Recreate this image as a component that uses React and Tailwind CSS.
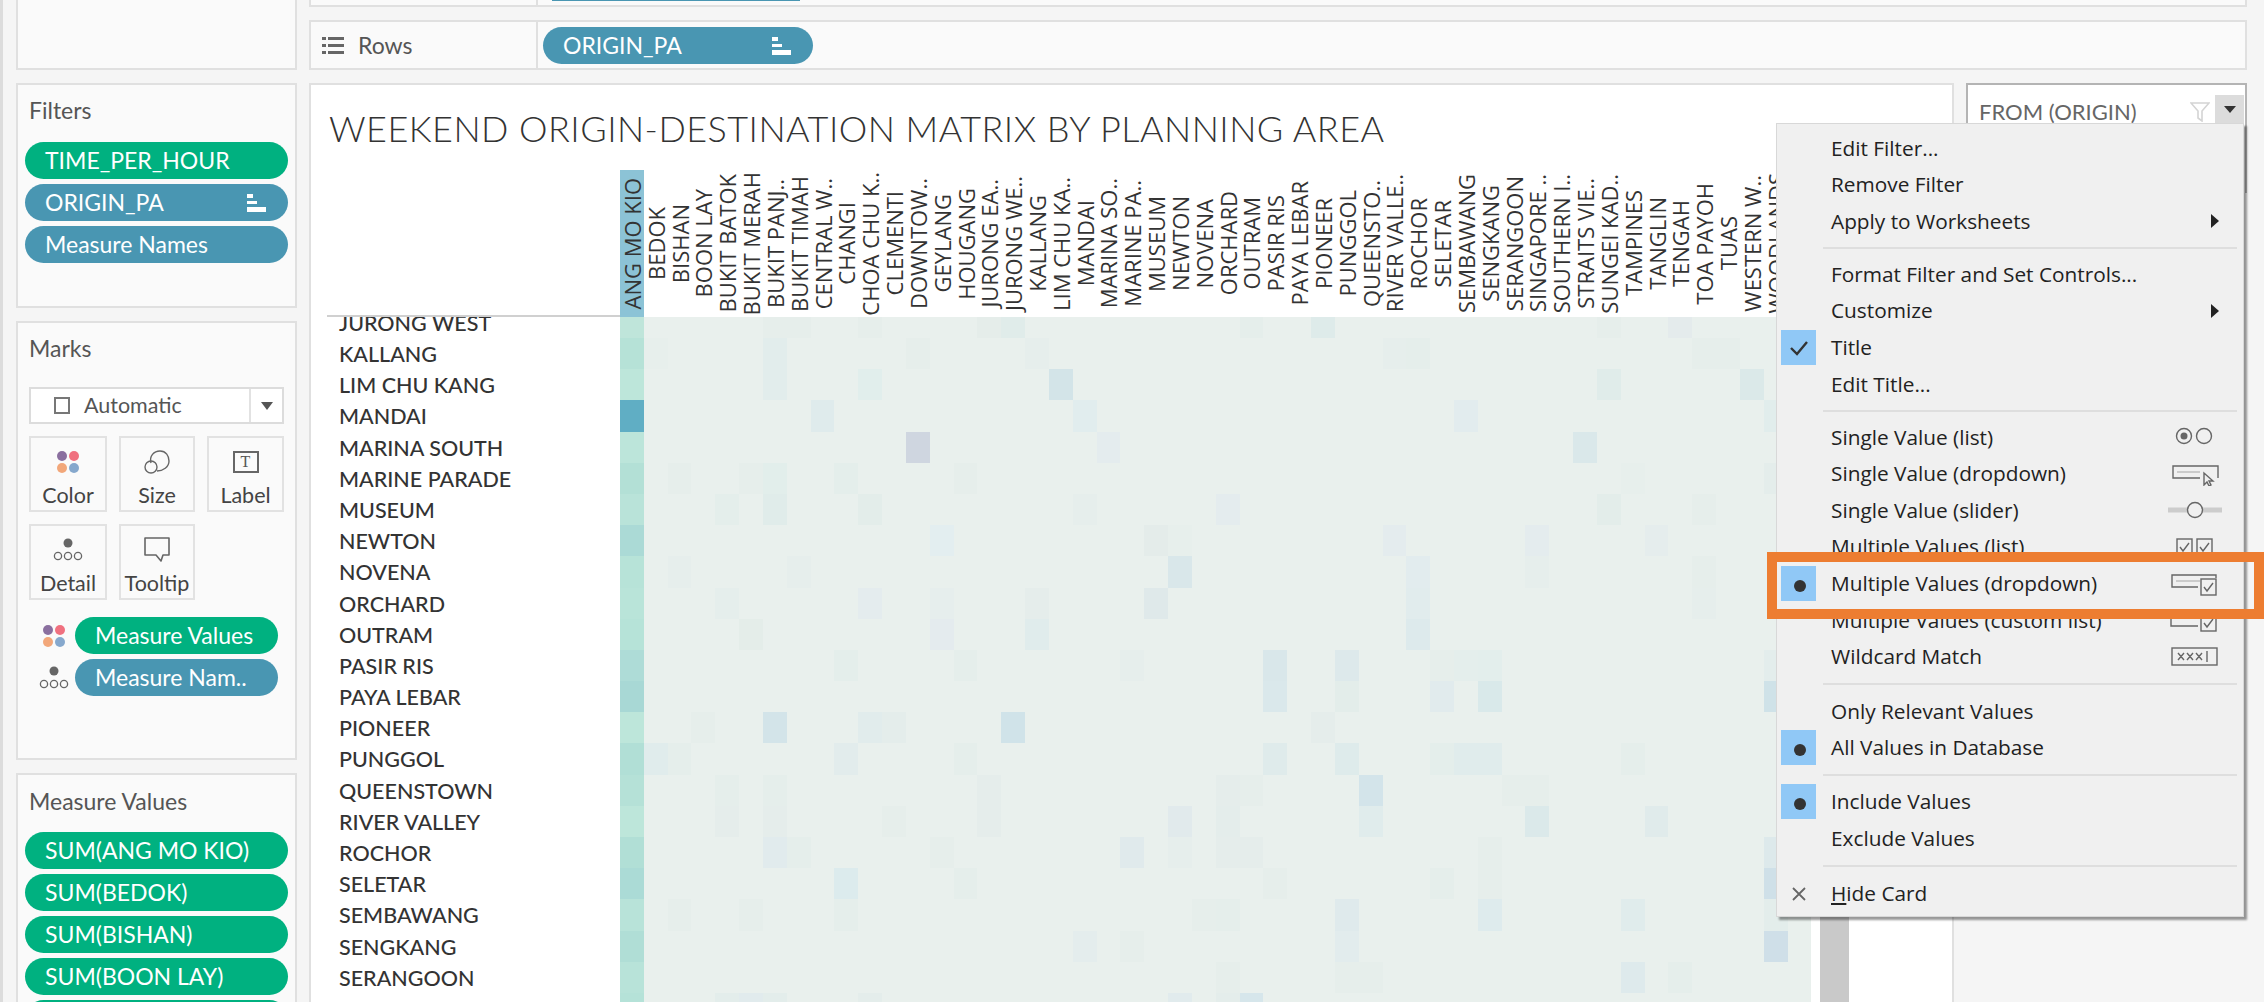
import React from "react";

const COLUMNS = ["ANG MO KIO","BEDOK","BISHAN","BOON LAY","BUKIT BATOK","BUKIT MERAH","BUKIT PANJ..","BUKIT TIMAH","CENTRAL W..","CHANGI","CHOA CHU K..","CLEMENTI","DOWNTOW..","GEYLANG","HOUGANG","JURONG EA..","JURONG WE..","KALLANG","LIM CHU KA..","MANDAI","MARINA SO..","MARINE PA..","MUSEUM","NEWTON","NOVENA","ORCHARD","OUTRAM","PASIR RIS","PAYA LEBAR","PIONEER","PUNGGOL","QUEENSTO..","RIVER VALLE..","ROCHOR","SELETAR","SEMBAWANG","SENGKANG","SERANGOON","SINGAPORE ..","SOUTHERN I..","STRAITS VIE..","SUNGEI KAD..","TAMPINES","TANGLIN","TENGAH","TOA PAYOH","TUAS","WESTERN W..","WOODLANDS","YISHUN"];

const ROWS = ["JURONG WEST","KALLANG","LIM CHU KANG","MANDAI","MARINA SOUTH","MARINE PARADE","MUSEUM","NEWTON","NOVENA","ORCHARD","OUTRAM","PASIR RIS","PAYA LEBAR","PIONEER","PUNGGOL","QUEENSTOWN","RIVER VALLEY","ROCHOR","SELETAR","SEMBAWANG","SENGKANG","SERANGOON","SINGAPORE RIVER"];

const FIRST_COL = ["#bfe5da","#b6e2d7","#bde6da","#60aec4","#bce5da","#b3e0d6","#b9e3d9","#abdad6","#b7e3d8","#b9e4d9","#b6e3d8","#aedcd7","#a8d8d5","#bde6da","#b1dfd6","#b5e1d7","#bde6da","#b1dfd6","#abdbd6","#b8e3d9","#b0ded6","#b8e3d9","#b5e2d8"];

// row -> { column: colour } for the cells that stand out
const HOT = {
  0: {6:"#e6eeeb",7:"#e6eeeb",10:"#e6eeeb",15:"#e5edea",16:"#e0ecea",26:"#e5eeeb",29:"#deebea",41:"#e6eeeb",44:"#e4ebec"},
  1: {1:"#e7efec",6:"#e2edec",12:"#e6eeeb",17:"#e6eeec",32:"#e6eeec",33:"#e5eeeb",45:"#e6eeeb",46:"#e6eeeb"},
  2: {6:"#e2edec",10:"#e1eeec",18:"#d3e4e8",41:"#e0ecea",47:"#dbe9e9"},
  3: {8:"#dfebec",19:"#e1edee",35:"#e2ecee",48:"#e1edec"},
  4: {12:"#cfd6e0",20:"#e4ecee",40:"#dae8ea"},
  5: {2:"#e6eeeb",5:"#e6eeeb",6:"#e2eeeb",9:"#e4eeeb",14:"#e6eeeb",42:"#e7efec",48:"#e4edeb"},
  6: {4:"#e4eeeb",6:"#e0ecea",10:"#e3edea",19:"#e6eeec",25:"#e4ecee",41:"#e3edea",45:"#e6eeeb"},
  7: {13:"#e3eef0",22:"#e4ecea",23:"#e7efec",32:"#e4ecee",38:"#e4ecee",43:"#e5eded"},
  8: {2:"#e6eeec",7:"#e6eeec",23:"#d9e7ea",33:"#e2ecee",38:"#e6eeec",45:"#e6eeeb"},
  9: {4:"#e5eeec",10:"#e4ecee",13:"#e6eeed",17:"#e5edeb",22:"#dfe9ea",33:"#e1eced",45:"#e6eeec"},
  10: {5:"#e4ede9",13:"#e4ebee",17:"#e0ecec",33:"#ddeaec"},
  11: {9:"#e4eeeb",14:"#e5eeeb",21:"#e6eeec",27:"#d9e7ea",30:"#dde9eb",34:"#e6eeeb",35:"#e4eeec",36:"#e3eeec",48:"#e3edec"},
  12: {27:"#dae8eb",30:"#e3edea",34:"#e1ebed",36:"#d9e9ea",48:"#cfe2e8"},
  13: {3:"#e6eeeb",6:"#d3e4e9",10:"#e1ecec",11:"#e4edeb",16:"#d0e3e9",29:"#e5edeb"},
  14: {1:"#e0ecec",2:"#e5eeeb",9:"#e2ecec",14:"#e5eeeb",27:"#dfebeb",30:"#deebeb",34:"#e4eeeb",35:"#e0ecec",36:"#e0ecec",42:"#e5eeeb"},
  15: {4:"#e5eeeb",6:"#e5eeeb",15:"#e5edeb",25:"#e5edeb",26:"#e6eeeb",31:"#d3e4ea",37:"#e6eeeb",38:"#e6eeeb"},
  16: {4:"#e5edeb",6:"#e5edeb",11:"#e6eeeb",15:"#e5edeb",23:"#e1eaec",25:"#e4edeb",31:"#e0ecec",38:"#dbe9ea",43:"#e0ebeb"},
  17: {6:"#e1ebed",7:"#e5eeeb",13:"#e6eeeb",21:"#e0eaec",23:"#e6eeec",25:"#e5edeb",26:"#e5edeb",36:"#e6eeeb",48:"#dde9eb"},
  18: {9:"#dcebed",14:"#e5eeeb",27:"#e6eeeb",34:"#e5eeeb",36:"#e6eeeb",48:"#cfe0e8"},
  19: {2:"#e6eeeb",5:"#e6eeeb",9:"#e5eeeb",24:"#e6eeeb",25:"#e5eeeb",30:"#dfeaec",36:"#deebed",42:"#e0ecec",48:"#e3edeb"},
  20: {19:"#e4eded",21:"#e6eeeb",30:"#e2eced",48:"#cfdfe8"},
  21: {25:"#e6eeeb",30:"#e6eeeb",31:"#e6eeeb",42:"#deeaec",44:"#e5eeeb"},
  22: {4:"#e3edeb",5:"#e1ebed",6:"#e3edeb",10:"#e4edeb",23:"#e1ebed",25:"#e4edeb",26:"#d6e6eb"},
};

const HeatRow = ({ r }) => (
  <div className="flex h-[31.2px] w-[1192px] shrink-0">
    {COLUMNS.map((c, i) => (
      <div
        key={c}
        className="h-full w-[23.84px] shrink-0"
        style={{ backgroundColor: i === 0 ? FIRST_COL[r] : (HOT[r] && HOT[r][i]) || "#e9f0ed" }}
      />
    ))}
  </div>
);

const Pill = ({ color = "blue", className = "", sort, children }) => (
  <div className={`flex h-[37px] shrink-0 items-center justify-between rounded-full pl-[20px] pr-[22px] text-[23px] text-white font-['Lato',sans-serif] ${color === "green" ? "bg-[#00b180]" : "bg-[#4996b2]"} ${className}`}>
    <span className="whitespace-nowrap">{children}</span>
    {sort && (
      <span className="flex w-[19px] flex-col items-start gap-[3px]">
        <span className="h-[4px] w-[6px] bg-white" />
        <span className="h-[3px] w-[10px] bg-white" />
        <span className="h-[5px] w-[19px] bg-white" />
      </span>
    )}
  </div>
);

const ColorIcon = () => (
  <svg width="24" height="24" viewBox="0 0 24 24">
    <circle cx="6" cy="6" r="5" fill="#8a6f9f" />
    <circle cx="18" cy="6" r="5" fill="#f0707f" />
    <circle cx="6" cy="18" r="5" fill="#f2a77a" />
    <circle cx="18" cy="18" r="5" fill="#86a8cd" />
  </svg>
);

const SizeIcon = () => (
  <svg width="28" height="26" viewBox="0 0 28 26" fill="none" stroke="#666" strokeWidth="1.4">
    <path d="M8 14C6 7 11 2 17 2c6 0 9 5 9 10 0 6-6 10-12 10" />
    <circle cx="8" cy="18" r="6" />
  </svg>
);

const LabelIcon = () => (
  <div className="flex h-[22px] w-[26px] items-center justify-center border-2 border-[#666] text-[16px] leading-none text-[#555] font-['Liberation_Serif',serif]">T</div>
);

const DetailIcon = () => (
  <svg width="30" height="24" viewBox="0 0 30 24">
    <circle cx="15" cy="5" r="4.5" fill="#666" />
    <g fill="none" stroke="#666" strokeWidth="1.3">
      <circle cx="5" cy="18" r="3.6" />
      <circle cx="15" cy="18" r="3.6" />
      <circle cx="25" cy="18" r="3.6" />
    </g>
  </svg>
);

const TooltipIcon = () => (
  <svg width="28" height="26" viewBox="0 0 28 26" fill="none" stroke="#666" strokeWidth="1.6">
    <path d="M2 1h24v17h-6l-2 6-5-6H2z" strokeLinejoin="round" />
  </svg>
);

const MarkButton = ({ icon, label }) => (
  <div className="flex h-[76px] flex-col items-center border-2 border-[#e2e2e2] pt-[10px]">
    <div className="flex h-[28px] items-center">{icon}</div>
    <div className="mt-[7px] text-[21.5px] leading-[24px] text-[#444]">{label}</div>
  </div>
);

const Sep = ({ h = "h-[16.4px]" }) => (
  <div className={`flex items-center pl-[46px] pr-[6px] ${h}`}>
    <div className="h-[2px] w-full bg-[#dedede]" />
  </div>
);

const Check = () => (
  <svg width="20" height="18" viewBox="0 0 20 18" fill="none" stroke="#333" strokeWidth="2.4">
    <path d="M2 9l6 6L18 3" />
  </svg>
);

const Dot = () => <div className="mt-[4px] ml-[2px] h-[12px] w-[12px] rounded-full bg-[#333]" />;

const Arrow = () => (
  <svg width="8" height="14" viewBox="0 0 8 14" className="mr-[24px]"><path d="M0 0l8 7-8 7z" fill="#222" /></svg>
);

const Ico = ({ children }) => (
  <svg width="54" height="24" viewBox="0 0 54 24" fill="none" stroke="#666" strokeWidth="1.4" className="mr-[21px]">{children}</svg>
);

const SingleList = () => (
  <Ico>
    <circle cx="16" cy="11" r="7.5" /><circle cx="16" cy="11" r="3.5" fill="#666" stroke="none" /><circle cx="36" cy="11" r="7.5" />
  </Ico>
);
const SingleDrop = () => (
  <Ico>
    <path d="M32 16H5V4h45v12" /><path d="M9 10h23" stroke="#bbb" />
    <path d="M36 11v12l3-3 2 4 2-1-2-4h4z" fill="#f0f0f0" />
  </Ico>
);
const Slider = () => (
  <Ico>
    <path d="M0 12h54" stroke="#ccc" strokeWidth="5" /><circle cx="27" cy="12" r="7.5" fill="#f0f0f0" />
  </Ico>
);
const MultiList = () => (
  <Ico>
    <rect x="9" y="4" width="15" height="16" /><path d="M12 12l3 4 6-8" />
    <rect x="29" y="4" width="15" height="16" /><path d="M32 12l3 4 6-8" />
  </Ico>
);
const MultiDrop = () => (
  <Ico>
    <path d="M30 15H4V3h44v3" /><path d="M8 9h24" stroke="#bbb" />
    <rect x="33" y="7" width="15" height="16" fill="#f0f0f0" /><path d="M36 15l3 4 6-8" />
  </Ico>
);
const MultiCustom = () => (
  <Ico>
    <path d="M30 18H3V2h45v5" />
    <rect x="33" y="7" width="15" height="16" fill="#f0f0f0" /><path d="M36 15l3 4 6-8" />
  </Ico>
);
const Wildcard = () => (
  <Ico>
    <rect x="4" y="3" width="45" height="17" />
    <path d="M10 8l6 7M16 8l-6 7M19 8l6 7M25 8l-6 7M28 8l6 7M34 8l-6 7M39 6v11" />
  </Ico>
);

const Item = ({ mark, right, children }) => (
  <div className="flex h-[36.6px] items-center">
    <div className="ml-[4px] flex h-[35px] w-[35px] shrink-0 items-center justify-center">{mark}</div>
    <div className="ml-[15px] whitespace-nowrap">{children}</div>
    <div className="ml-auto flex items-center">{right}</div>
  </div>
);

const Marked = ({ children }) => (
  <div className="flex h-[35px] w-[35px] items-center justify-center bg-[#90c8f6]">{children}</div>
);

const Menu = () => (
  <div className="absolute left-[1776px] top-[123px] h-[794px] w-[468px] border border-[#d8d8d8] bg-[#f0f0f0] pt-[6px] text-[20.8px] text-[#222] shadow-[3px_3px_2px_rgba(0,0,0,0.4)] font-['Open_Sans',sans-serif]">
    <Item>Edit Filter...</Item>
    <Item>Remove Filter</Item>
    <Item right={<Arrow />}>Apply to Worksheets</Item>
    <Sep />
    <Item>Format Filter and Set Controls...</Item>
    <Item right={<Arrow />}>Customize</Item>
    <Item mark={<Marked><Check /></Marked>}>Title</Item>
    <Item>Edit Title...</Item>
    <Sep />
    <Item right={<SingleList />}>Single Value (list)</Item>
    <Item right={<SingleDrop />}>Single Value (dropdown)</Item>
    <Item right={<Slider />}>Single Value (slider)</Item>
    <Item right={<MultiList />}>Multiple Values (list)</Item>
    <Item mark={<Marked><Dot /></Marked>} right={<MultiDrop />}>Multiple Values (dropdown)</Item>
    <Item right={<MultiCustom />}>Multiple Values (custom list)</Item>
    <Item right={<Wildcard />}>Wildcard Match</Item>
    <Sep h="h-[18px]" />
    <Item>Only Relevant Values</Item>
    <Item mark={<Marked><Dot /></Marked>}>All Values in Database</Item>
    <Sep h="h-[17px]" />
    <Item mark={<Marked><Dot /></Marked>}>Include Values</Item>
    <Item>Exclude Values</Item>
    <Sep h="h-[19px]" />
    <Item mark={<svg width="16" height="16" viewBox="0 0 16 16" stroke="#666" strokeWidth="1.8"><path d="M2 2l12 12M14 2L2 14" /></svg>}>
      <span className="underline underline-offset-2">H</span>ide Card
    </Item>
  </div>
);

export default function App() {
  return (
    <div className="relative flex h-[1002px] w-[2264px] overflow-hidden bg-[#f5f5f5] font-['Lato',sans-serif]">
      <div className="h-full w-[3px] shrink-0 bg-[#dcdcdc]" />

      {/* Left cards */}
      <div className="ml-[13px] flex w-[281px] shrink-0 flex-col gap-[13px]">
        <div className="h-[70px] shrink-0 border-2 border-t-0 border-[#e0e0e0] bg-[#fafafa]" />

        <div className="flex h-[225px] shrink-0 flex-col border-2 border-[#e0e0e0] bg-[#fafafa] px-[7px]">
          <div className="ml-[4px] mt-[9px] mb-[16px] h-[32px] text-[23px] leading-[32px] text-[#555]">Filters</div>
          <div className="flex flex-col gap-[5px]">
            <Pill color="green">TIME_PER_HOUR</Pill>
            <Pill sort>ORIGIN_PA</Pill>
            <Pill>Measure Names</Pill>
          </div>
        </div>

        <div className="flex h-[439px] shrink-0 flex-col border-2 border-[#e0e0e0] bg-[#fafafa] px-[11px]">
          <div className="mt-[9px] mb-[23px] h-[32px] text-[23px] leading-[32px] text-[#555]">Marks</div>
          <div className="flex h-[37px] shrink-0 items-center border-2 border-[#dcdcdc] bg-white">
            <div className="ml-[23px] h-[17px] w-[16px] border-2 border-[#777]" />
            <span className="ml-[14px] text-[21.5px] text-[#555]">Automatic</span>
            <div className="ml-auto flex h-full w-[33px] items-center justify-center border-l-2 border-[#e2e2e2]">
              <svg width="12" height="8" viewBox="0 0 12 8"><path d="M0 0h12L6 8z" fill="#555" /></svg>
            </div>
          </div>
          <div className="mt-[12px] grid grid-cols-[78px_76px_77px] gap-x-[12px] gap-y-[12px]">
            <MarkButton icon={<ColorIcon />} label="Color" />
            <MarkButton icon={<SizeIcon />} label="Size" />
            <MarkButton icon={<LabelIcon />} label="Label" />
            <MarkButton icon={<DetailIcon />} label="Detail" />
            <MarkButton icon={<TooltipIcon />} label="Tooltip" />
          </div>
          <div className="mt-[17px] flex flex-col gap-[5px] pl-[7px]">
            <div className="flex items-center">
              <div className="flex w-[35px] justify-center"><ColorIcon /></div>
              <Pill color="green" className="ml-[4px] w-[203px]">Measure Values</Pill>
            </div>
            <div className="flex items-center">
              <div className="flex w-[35px] justify-center"><DetailIcon /></div>
              <Pill className="ml-[4px] w-[203px]">Measure Nam..</Pill>
            </div>
          </div>
        </div>

        <div className="flex flex-1 flex-col border-2 border-b-0 border-[#e0e0e0] bg-[#fafafa] px-[7px]">
          <div className="ml-[4px] mt-[10px] mb-[15px] h-[32px] text-[23px] leading-[32px] text-[#555]">Measure Values</div>
          <div className="flex flex-col gap-[5px]">
            <Pill color="green">SUM(ANG MO KIO)</Pill>
            <Pill color="green">SUM(BEDOK)</Pill>
            <Pill color="green">SUM(BISHAN)</Pill>
            <Pill color="green">SUM(BOON LAY)</Pill>
            <div className="h-[37px] shrink-0 rounded-full bg-[#00b180]" />
          </div>
        </div>
      </div>

      {/* Shelves, view and filter card */}
      <div className="ml-[12px] flex w-[1938px] shrink-0 flex-col">
        <div className="flex h-[7px] shrink-0 border-2 border-t-0 border-[#e0e0e0] bg-[#fafafa]">
          <div className="w-[227px] shrink-0 border-r-2 border-[#e0e0e0]" />
          <div className="ml-[14px] h-[1px] w-[248px] bg-[#4996b2]" />
        </div>
        <div className="mt-[13px] flex h-[50px] shrink-0 border-2 border-[#e0e0e0] bg-[#fafafa]">
          <div className="flex w-[227px] shrink-0 items-center border-r-2 border-[#e0e0e0] pl-[11px]">
            <svg width="22" height="17" viewBox="0 0 22 17" fill="#666">
              <rect width="4" height="3" /><rect x="6" width="16" height="3" />
              <rect y="7" width="4" height="3" /><rect x="6" y="7" width="16" height="3" />
              <rect y="14" width="4" height="3" /><rect x="6" y="14" width="16" height="3" />
            </svg>
            <span className="ml-[14px] text-[23px] text-[#555]">Rows</span>
          </div>
          <Pill sort className="ml-[5px] mt-[5px] w-[270px]">ORIGIN_PA</Pill>
        </div>

        <div className="mt-[13px] flex min-h-0 flex-1 gap-[12px]">
          <div className="flex min-h-0 w-[1645px] shrink-0 flex-col overflow-hidden border-2 border-b-0 border-[#e0e0e0] bg-white">
            <div className="h-[85px] shrink-0 pl-[18px] pt-[20px] text-[36px] font-light leading-[46px] tracking-[0.46px] whitespace-nowrap text-[#333]">
              WEEKEND ORIGIN-DESTINATION MATRIX BY PLANNING AREA
            </div>
            <div className="flex min-h-0 flex-1 pl-[16px]">
              <div className="flex min-h-0 flex-col">
                {/* Column headers */}
                <div className="flex h-[147px] shrink-0">
                  <div className="w-[293px] shrink-0 border-b-2 border-[#d0d0d0]" />
                  {COLUMNS.map((c, i) => (
                    <div
                      key={c}
                      className={`flex h-full w-[23.84px] shrink-0 items-center justify-center ${i === 0 ? "bg-[#8cc3d6]" : ""}`}
                    >
                      <span className="rotate-180 whitespace-nowrap text-[22px] leading-none text-[#333] [writing-mode:vertical-rl] font-['Open_Sans',sans-serif]">{c}</span>
                    </div>
                  ))}
                </div>
                {/* Matrix body, scrolled so the first row is cut */}
                <div className="min-h-0 flex-1 overflow-hidden">
                  <div className="-mt-[10.2px] flex flex-col">
                    {ROWS.map((name, r) => (
                      <div key={name} className="flex h-[31.2px] shrink-0">
                        <div className="w-[293px] shrink-0 pl-[12px] pt-[1px] text-[21.5px] font-medium leading-[31.2px] whitespace-nowrap text-[#333]">{name}</div>
                        <HeatRow r={r} />
                      </div>
                    ))}
                  </div>
                </div>
              </div>
              <div className="ml-[8px] mt-[147px] w-[29px] shrink-0 bg-[#c9c9c9]" />
            </div>
          </div>

          {/* Filter card behind the menu */}
          <div className="flex h-[110px] w-[281px] shrink-0 border-2 border-b-0 border-[#b4b4b4] bg-white pl-[11px] pt-[10px]">
            <span className="text-[22px] leading-[34px] text-[#666]">FROM (ORIGIN)</span>
            <div className="ml-auto mr-[1px] flex">
              <svg width="20" height="20" viewBox="0 0 20 20" fill="none" stroke="#d4d4d4" strokeWidth="1.6" className="mr-[5px] mt-[7px]">
                <path d="M1 1h18l-7 8v10l-4-3V9z" />
              </svg>
              <div className="flex h-[28px] w-[29px] items-center justify-center bg-[#dcdcdc]">
                <svg width="12" height="7" viewBox="0 0 12 7"><path d="M0 0h12L6 7z" fill="#333" /></svg>
              </div>
            </div>
          </div>
        </div>
      </div>

      <Menu />
      {/* Orange call-out */}
      <div className="absolute left-[1767px] top-[552px] h-[67px] w-[497px] border-[10px] border-[#ed7d31]" />
    </div>
  );
}
